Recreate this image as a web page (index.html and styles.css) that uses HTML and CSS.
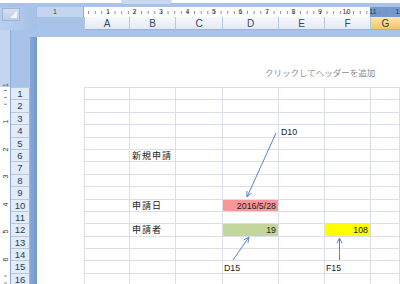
FILE: index.html
```html
<!DOCTYPE html>
<html lang="ja">
<head>
    <meta charset="UTF-8">
    <title>新規申請 - ページレイアウト</title>
    <link rel="stylesheet" href="styles.css">
</head>
<body>

<div class="topbar"><div class="tab"></div></div>

<div class="excel">
    <div class="corner"><div class="selall"></div></div>

    <div class="hruler-margin"><span>1</span></div>
    <div class="hruler">
        <span>1</span><span>2</span><span>3</span><span>4</span><span>5</span><span>6</span>
        <span>7</span><span>8</span><span>9</span><span>10</span><span>11</span><span>12</span>
    </div>

    <div class="colhdrs">
        <div class="colhdr">A</div>
        <div class="colhdr">B</div>
        <div class="colhdr">C</div>
        <div class="colhdr">D</div>
        <div class="colhdr">E</div>
        <div class="colhdr">F</div>
        <div class="colhdr sel">G</div>
    </div>

    <div class="vruler-top"><span>1</span></div>
    <div class="divider"></div>
    <div class="pagehead">クリックしてヘッダーを追加</div>

    <div class="vruler">
        <span>1</span><span>2</span><span>3</span><span>4</span><span>5</span><span>6</span>
    </div>

    <div class="rowhdrs">
        <div>1</div><div>2</div><div>3</div><div>4</div>
        <div>5</div><div>6</div><div>7</div><div>8</div>
        <div>9</div><div>10</div><div>11</div><div>12</div>
        <div>13</div><div>14</div><div>15</div><div>16</div>
    </div>

    <div class="margin"></div>

    <div class="sheet">
        <!-- 1 -->
        <div class="c"></div><div class="c"></div><div class="c"></div><div class="c"></div><div class="c"></div><div class="c"></div><div class="c"></div>
        <!-- 2 -->
        <div class="c"></div><div class="c"></div><div class="c"></div><div class="c"></div><div class="c"></div><div class="c"></div><div class="c"></div>
        <!-- 3 -->
        <div class="c"></div><div class="c"></div><div class="c"></div><div class="c"></div><div class="c"></div><div class="c"></div><div class="c"></div>
        <!-- 4 -->
        <div class="c"></div><div class="c"></div><div class="c"></div><div class="c"></div><div class="c note">D10</div><div class="c"></div><div class="c"></div>
        <!-- 5 -->
        <div class="c"></div><div class="c"></div><div class="c"></div><div class="c"></div><div class="c"></div><div class="c"></div><div class="c"></div>
        <!-- 6 -->
        <div class="c"></div><div class="c jp">新規申請</div><div class="c"></div><div class="c"></div><div class="c"></div><div class="c"></div><div class="c"></div>
        <!-- 7 -->
        <div class="c"></div><div class="c"></div><div class="c"></div><div class="c"></div><div class="c"></div><div class="c"></div><div class="c"></div>
        <!-- 8 -->
        <div class="c"></div><div class="c"></div><div class="c"></div><div class="c"></div><div class="c"></div><div class="c"></div><div class="c"></div>
        <!-- 9 -->
        <div class="c"></div><div class="c"></div><div class="c"></div><div class="c"></div><div class="c"></div><div class="c"></div><div class="c"></div>
        <!-- 10 -->
        <div class="c"></div><div class="c jp">申請日</div><div class="c"></div><div class="c num pink">2016/5/28</div><div class="c"></div><div class="c"></div><div class="c"></div>
        <!-- 11 -->
        <div class="c"></div><div class="c"></div><div class="c"></div><div class="c"></div><div class="c"></div><div class="c"></div><div class="c"></div>
        <!-- 12 -->
        <div class="c"></div><div class="c jp">申請者</div><div class="c"></div><div class="c num green">19</div><div class="c"></div><div class="c num yellow">108</div><div class="c"></div>
        <!-- 13 -->
        <div class="c"></div><div class="c"></div><div class="c"></div><div class="c"></div><div class="c"></div><div class="c"></div><div class="c"></div>
        <!-- 14 -->
        <div class="c"></div><div class="c"></div><div class="c"></div><div class="c"></div><div class="c"></div><div class="c"></div><div class="c"></div>
        <!-- 15 -->
        <div class="c"></div><div class="c"></div><div class="c"></div><div class="c tag">D15</div><div class="c"></div><div class="c tag">F15</div><div class="c"></div>
        <!-- 16 -->
        <div class="c"></div><div class="c"></div><div class="c"></div><div class="c"></div><div class="c"></div><div class="c"></div><div class="c"></div>

        <svg class="arrows" width="316" height="197" viewBox="84 87 316 197">
            <g fill="none" stroke="#5b84c2" stroke-width="1">
                <path d="M276 133 L247 197 M251.5 193.1 L247 197 L246.9 191"/>
                <path d="M233 260 L249 237 M243.8 240 L249 237 L248 242.9"/>
                <path d="M339.5 260 L339.5 238 M337 243.4 L339.5 238 L342 243.4"/>
            </g>
        </svg>
    </div>
</div>

</body>
</html>
```

FILE: styles.css
```css
* {
    box-sizing: border-box;
}
body {
    margin: 0;
    width: 400px;
    height: 284px;
    overflow: hidden;
    background: #a9c3e8;
    font-family: "Liberation Sans", "Noto Sans CJK JP", sans-serif;
}
.topbar {
    height: 3px;
    background: #fff;
    display: flex;
}
.tab {
    margin-left: 121px;
    width: 51px;
    height: 4px;
    background: #c9daf0;
    border-radius: 0 0 4px 4px;
}
.excel {
    display: grid;
    grid-template-columns: 11px 19px 7px 47px 45px 46px 47px 56px 46px 46px 1fr;
    grid-template-rows: 4px 10px 13px 7px 50px auto;
}

/* corner / select all */
.corner {
    grid-column: 1 / 4;
    grid-row: 2 / 4;
    padding: 1px 0 0 2px;
    background: linear-gradient(to right, #b9cfee, #a5c0e7);
}
.selall {
    width: 18px;
    height: 13px;
    background: linear-gradient(#d3e0f2, #bacdea);
    border: 1px solid #9cb5da;
    display: flex;
    justify-content: flex-end;
    align-items: flex-end;
    padding: 2px;
}
.selall::after {
    content: "";
    width: 7px;
    height: 7px;
    background: #f3f7fc;
    clip-path: polygon(100% 0, 100% 100%, 0 100%);
}

/* rulers */
.hruler-margin {
    grid-column: 4;
    grid-row: 2;
    background: #c4d6ef;
    border-right: 1px solid #8fabd3;
    font-size: 7px;
    line-height: 10px;
    color: #444;
    padding-left: 16px;
}
.hruler {
    grid-column: 5 / 12;
    grid-row: 2;
    display: flex;
    padding-left: 10.75px;
    font-size: 7px;
    line-height: 10px;
    color: #333;
    overflow: hidden;
    background-image:
        linear-gradient(to right, #8a8a8a 1px, transparent 1px),
        linear-gradient(to right, #fff 286px, #7398cf 286px);
    background-size: 6.625px 3px, 100% 100%;
    background-position: 4.1px 4px, 0 0;
    background-repeat: repeat-x, no-repeat;
}
.hruler span {
    flex: 0 0 26.5px;
    text-align: center;
}
.vruler-top {
    grid-column: 1;
    grid-row: 4 / 6;
    background: #c4d6ef;
    border-right: 1px solid #8fabd3;
    font-size: 7px;
    color: #444;
    padding-top: 29px;
    display: flex;
    justify-content: center;
}
.vruler-top span,
.vruler span {
    writing-mode: vertical-rl;
    transform: rotate(180deg);
}
.vruler {
    grid-column: 1;
    grid-row: 6;
    background-color: #fff;
    background-image: linear-gradient(#8a8a8a 1px, transparent 1px);
    background-size: 3px 6.875px;
    background-position: 4px 3px;
    background-repeat: repeat-y;
    border-right: 1px solid #8fabd3;
    display: flex;
    flex-direction: column;
    align-items: center;
    padding-top: 21px;
    font-size: 7px;
    color: #333;
}
.vruler span {
    height: 27.5px;
    text-align: center;
    background: #fff;
}

/* headers */
.colhdrs {
    grid-column: 5 / 12;
    grid-row: 3;
    display: grid;
    grid-template-columns: 45px 46px 47px 56px 46px 46px 1fr;
    border-left: 1px solid #b6c8de;
}
.colhdr {
    background: linear-gradient(#f8fafd, #e1e9f4);
    border-right: 1px solid #b6c8de;
    border-bottom: 1px solid #9db5d4;
    font-size: 10px;
    color: #34486a;
    display: flex;
    align-items: center;
    justify-content: center;
}
.colhdr.sel {
    background: linear-gradient(#fde6b6, #f6c466);
    border-right: none;
    border-bottom-color: #e0a94b;
    color: #3a3a3a;
}
.rowhdrs {
    grid-column: 2;
    grid-row: 6;
    border-top: 1px solid #b6c8de;
}
.rowhdrs div {
    height: 12.4px;
    background: #e3ebf6;
    border-bottom: 1px solid #b6c8de;
    border-right: 1px solid #9db5d4;
    font-size: 9.5px;
    line-height: 12px;
    text-align: center;
    color: #25405f;
}
.divider {
    grid-column: 3;
    grid-row: 5 / 7;
    background: linear-gradient(to right, #86a8d8, #7097cf);
}

/* page */
.pagehead {
    grid-column: 4 / 12;
    grid-row: 5;
    background: #fff;
    padding: 30px 0 0 228px;
    font-size: 8.5px;
    line-height: 12px;
    color: #8c8c8c;
    white-space: nowrap;
}
.margin {
    grid-column: 4;
    grid-row: 6;
    background: #fff;
}
.sheet {
    grid-column: 5 / 12;
    grid-row: 6;
    position: relative;
    background: #fff;
    display: grid;
    grid-template-columns: 45px 46px 47px 56px 46px 46px 1fr;
    grid-auto-rows: 12.4px;
    border-top: 1px solid #dcdfe7;
    border-left: 1px solid #dcdfe7;
}
.c {
    border-right: 1px solid #dcdfe7;
    border-bottom: 1px solid #dcdfe7;
    padding: 0 2px;
    font-size: 8.8px;
    line-height: 12px;
    white-space: nowrap;
    overflow: hidden;
    color: #1a1a1a;
}
.jp {
    font-size: 9px;
    letter-spacing: 1px;
    padding-left: 2px;
}
.note {
    padding-left: 2px;
    padding-top: 1px;
}
.tag {
    padding-left: 1px;
    padding-top: 1px;
}
.num {
    text-align: right;
}
.pink {
    background: #f79797;
}
.green {
    background: #c3d69b;
}
.yellow {
    background: #ffff00;
}
.arrows {
    position: absolute;
    left: -1px;
    top: -1px;
    pointer-events: none;
}
```
